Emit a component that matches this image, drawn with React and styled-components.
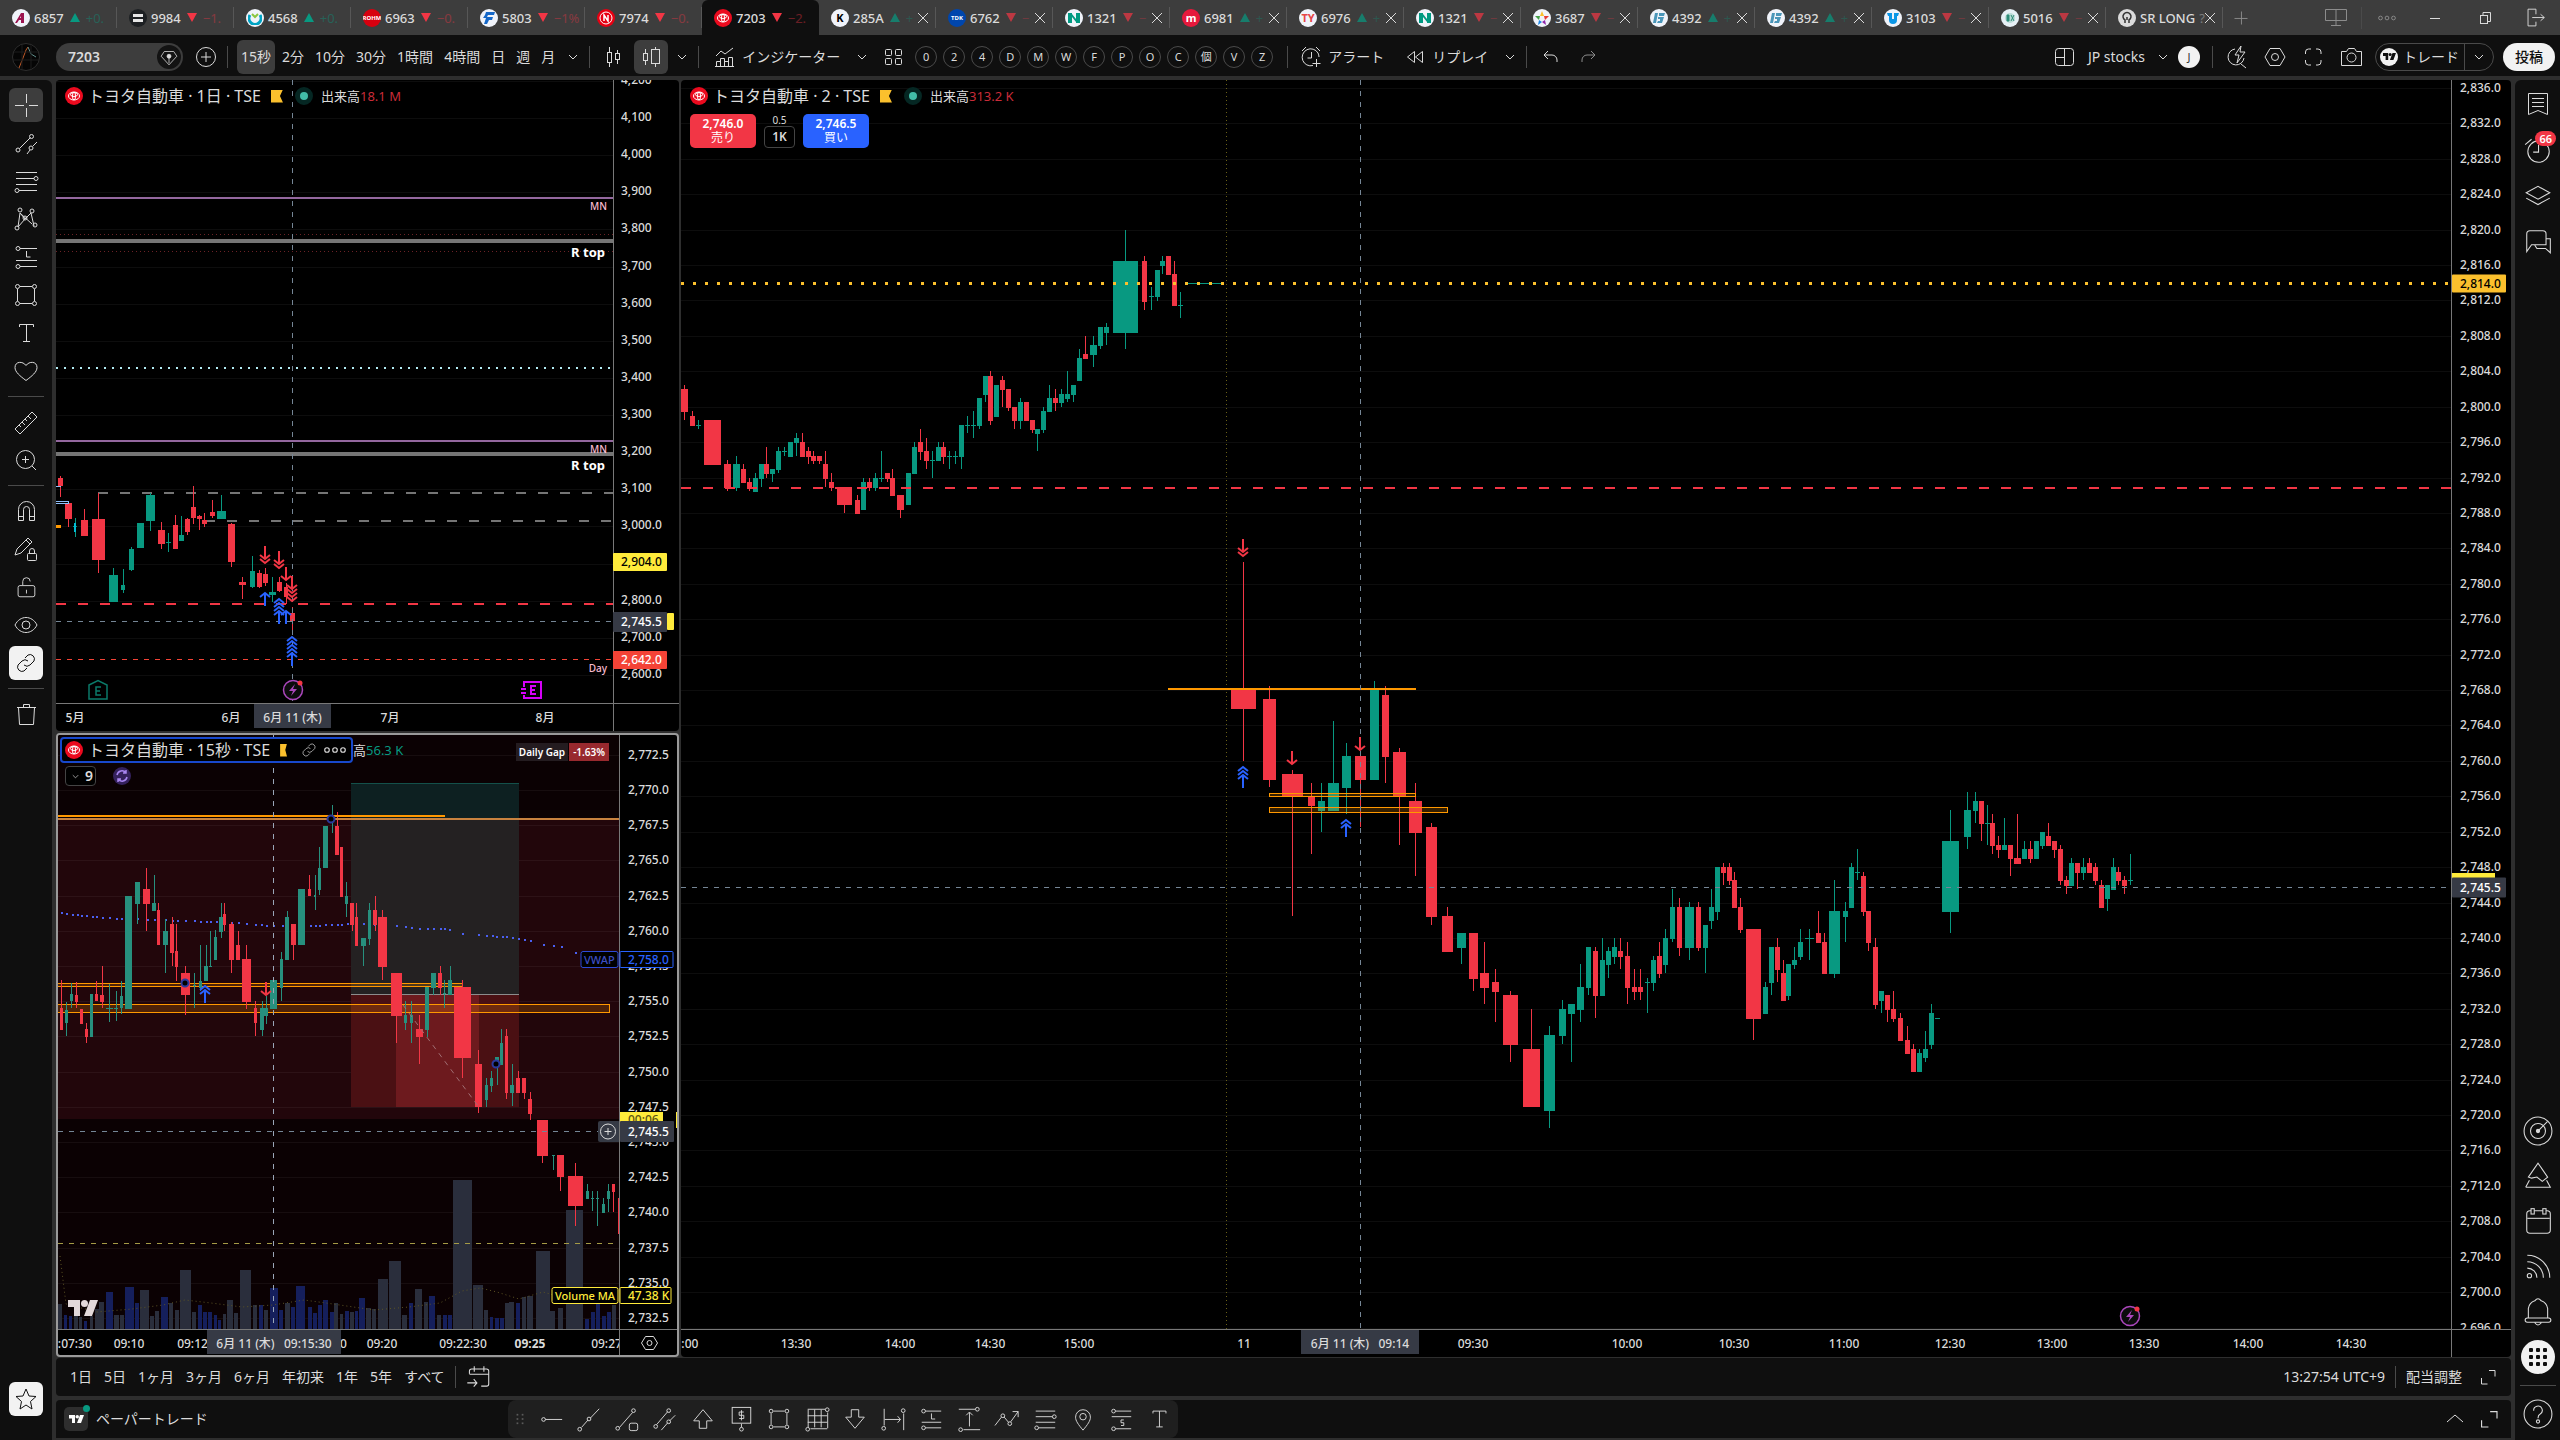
import React from "react";
import styled, { createGlobalStyle } from "styled-components";

const UP = "#089981";
const DOWN = "#f23645";

const GlobalStyle = createGlobalStyle`
  * {
    box-sizing: border-box;
  }
  body {
    margin: 0;
    background: #2e2e2e;
    color: #dbdbdb;
    font-family: "Noto Sans", "Noto Sans CJK JP", sans-serif;
    font-size: 14px;
    line-height: 20px;
  }
  button, input {
    font: inherit;
    color: inherit;
    border: 0;
    padding: 0;
    background: none;
  }
  button {
    cursor: pointer;
  }
  svg {
    display: block;
    flex: none;
  }
  svg text {
    font-size: 12px;
    font-weight: 500;
    fill: #dbdbdb;
  }
`;

/* ---------- icons, drawn on a 28px grid ---------- */

const dot = (x, y, r = 2) => <circle cx={x} cy={y} r={r} />;

const icons = {
  gem: <><path d="M8 7h12l4 6-10 11L4 13z" /><circle cx="14" cy="13" r="2.500" fill="currentColor" /><path d="M14 14v8" /></>,
  plusCircle: <><circle cx="14" cy="14" r="9.5" /><path d="M14 9v10M9 14h10" /></>,
  chevron: <path d="M10 12l4 4 4-4" />,
  chevronUp: <path d="M6 17l8-7 8 7" />,
  candles: <><path d="M10.500 4v5M10.500 20v4M18.500 7v3M18.500 17v4" /><rect x="8.500" y="9.500" width="4" height="10" /><rect x="16.500" y="10.500" width="4" height="6" /></>,
  volCandles: <><path d="M8.500 6v4M8.500 17v5M18.500 4v2M18.500 21v3" /><rect x="6.500" y="10.500" width="4" height="7" /><rect x="14.500" y="6.500" width="8" height="14" /></>,
  indicators: <><path d="M5 13l5-5 4 3 8-6M5.500 23.500v-5h4v5M9.500 23.500v-8h4v8M13.500 23.500v-5h4v5M17.500 23.500v-9h4v9M4 23.500h19" /></>,
  grid: <><rect x="6.500" y="6.500" width="6" height="6" rx="1" /><rect x="16.500" y="6.500" width="6" height="6" rx="1" /><rect x="6.500" y="15.500" width="6" height="6" rx="1" /><rect x="16.500" y="15.500" width="6" height="6" rx="1" /></>,
  alarm: <><path d="M21 10a8.500 8.500 0 1 0-5 12.500M14.500 9v6h-4M5 8l4-4M19 4l4 4M19.500 16v8M15.500 20.500h8" /><path d="M21 10a9 9 0 0 1 1 4" /></>,
  rewind: <><path d="M13.500 8.500v11L6.500 14z" /><path d="M21.500 8.500v11L14.500 14z" /></>,
  undo: <path d="M12 8l-4 4 4 4M8 12h8a5 5 0 0 1 5 5v2" />,
  redo: <path d="M17 8l4 4-4 4M21 12h-8a5 5 0 0 0-5 5v2" />,
  layout: <><rect x="5.500" y="5.500" width="18" height="17" rx="3" /><path d="M14.500 6v16M6 14.500h8" /></>,
  boltSearch: <><path d="M12 6a8 8 0 1 0 9 9M18 21l5 4M18 3l-6 9h4l-2 8 8-11h-5z" /></>,
  hexagon: <><path d="M9 5.500h10l5 8.500-5 8.500H9L4 14z" /><circle cx="14" cy="14" r="3.500" /></>,
  fullscreen: <path d="M6.500 11V9a3 3 0 0 1 3-3H12M17 6h2a3 3 0 0 1 3 3v2M22 17v2a3 3 0 0 1-3 3h-2M12 22H9.500a3 3 0 0 1-3-3v-2" />,
  camera: <><path d="M4.500 8.500h5l2-3h6l2 3h5v14h-20z" /><circle cx="14.500" cy="14.500" r="4.500" /></>,
  cross: <path d="M14.500 3v9M14.500 17v9M3 14.500h9M17 14.500h9" />,
  trend: <><path d="M7.500 19.500l11-11M15 25l3-4M21 17l4-4" />{dot(6, 21)}{dot(19.500, 7.500)}{dot(19, 19)}</>,
  fib: <><path d="M4 5.500h21M4 11.500h18M4 17.500h21M7 23.500h18" />{dot(24, 11.500)}{dot(5, 23.500)}</>,
  pattern: <><path d="M6 22l2-14 12 11M8 8l5 6 6-6 3 13M6 22l7-8" />{dot(8, 5)}{dot(20, 6)}{dot(5, 23)}{dot(23, 20)}{dot(13, 13)}</>,
  forecastL: <><path d="M8 5.500h17M14.500 8v6h4M4 17.500h21M8 23.500h17" />{dot(6, 5.500)}{dot(6, 23.500)}</>,
  forecastS: <><path d="M8 5.500h17M4 11.500h21M8 24.500h17M17 15h-3v3h3v3h-3" />{dot(6, 5.500)}{dot(6, 24.500)}</>,
  rect: <><path d="M8 5.500h12M8 22.500h12M5.500 8v12M22.500 8v12" />{dot(5.500, 5.500)}{dot(22.500, 5.500)}{dot(5.500, 22.500)}{dot(22.500, 22.500)}</>,
  text: <path d="M7.500 8V5.500h14V8M14.500 5.500v17M11 22.500h7" />,
  heart: <path d="M14 23.500C8 19 3 15 3 10.500 3 4 11 4 14 8.500 17 4 25 4 25 10.500 25 15 20 19 14 23.500z" />,
  ruler: <path d="M3 21L20 4l5 5L8 26zM7 17l2 2M10 14l3 3M13 11l2 2M16 8l3 3" />,
  zoom: <><circle cx="13.500" cy="13.500" r="9" /><path d="M20 20l4 4M13.500 10v7M10 13.500h7" /></>,
  magnet: <path d="M6.500 23.500v-11a8 8 0 0 1 16 0v11h-5v-11a3 3 0 0 0-6 0v11zM6.500 19.500h5M17.500 19.500h5" />,
  pencilLock: <><path d="M3 20l2-6L16 3l4 4L9 18zM14 5l4 4" /><rect x="15.500" y="18.500" width="9" height="7" rx="1" /><path d="M17.500 18v-2a2.500 2.500 0 0 1 5 0v2" /></>,
  lock: <><rect x="5.500" y="12.500" width="18" height="12" rx="2" /><path d="M10.500 12V8a4 4 0 0 1 8 0M14.500 17v4" /></>,
  eye: <><path d="M3 14c5-10 17-10 22 0-5 10-17 10-22 0z" /><circle cx="14" cy="14" r="4" /></>,
  link: <path d="M13 9l3-3a4.500 4.500 0 0 1 6 6l-4 4a4.500 4.500 0 0 1-6 0M15 19l-3 3a4.500 4.500 0 0 1-6-6l4-4a4.500 4.500 0 0 1 6 0" />,
  trash: <path d="M5 7.500h19M11.500 7V4.500h6V7M6.500 7.500l1 17h14l1-17" />,
  star: <path d="M14 4l3 7 7 .5-5.500 5L20 24l-6-4-6 4 1.500-7.500L4 11.500l7-.5z" />,
  bookmark: <path d="M4.500 3.500h19v21l-9.500-4-9.500 4zM8 8.500h12M8 12.500h12M8 16.500h12" />,
  clock: <><circle cx="14.500" cy="15.500" r="10" /><path d="M14.500 9v7h-5M2 9l6-5" /></>,
  layers: <path d="M3 11l11-6 11 6-11 6zM3 16l11 6 11-6" />,
  chats: <path d="M3.500 23V6.500a3 3 0 0 1 3-3h12a3 3 0 0 1 3 3v10H8zM11 17l2 3h8l4.500 4v-13h-4" />,
  radar: <><circle cx="14" cy="14" r="13" /><circle cx="14" cy="14" r="7" /><circle cx="14" cy="14" r="1.500" fill="currentColor" /><path d="M14 14l9-9" /></>,
  mountain: <path d="M2.500 24.500h23L22 18M2.500 24.500L6 18M5 15l9-13 9 13-5 4-5-4-5 1z" />,
  calendar: <><rect x="3.500" y="4.500" width="22" height="21" rx="3" /><path d="M4 11.500h21" /><rect x="7.500" y="2.500" width="3" height="5" fill="#0f0f0f" /><rect x="18.500" y="2.500" width="3" height="5" fill="#0f0f0f" /></>,
  rss: <><path d="M4 4a21 21 0 0 1 21 21M4 10a15 15 0 0 1 15 15M4 16a9 9 0 0 1 9 9" />{dot(6, 23)}</>,
  bell: <path d="M5 20.500v-9a9 9 0 0 1 6-7q3-4 6 0a9 9 0 0 1 6 7v9M4 20.500h20a2 2 0 0 1 0 4H4a2 2 0 0 1 0-4zM11 25q3 4 6 0" />,
  apps: <g fill="#0f0f0f" stroke="none">{[5, 12, 19].map((x) => [5, 12, 19].map((y) => <rect key={`${x}-${y}`} x={x} y={y} width="4" height="4" rx="1" />))}</g>,
  help: <><circle cx="14" cy="14" r="13" /><path d="M10 11a4 4 0 1 1 6 3q-2 1-2 4" />{dot(14, 21, 1.5)}</>,
  calGo: <path d="M6 11V8.500a2 2 0 0 1 2-2h14a2 2 0 0 1 2 2v12a2 2 0 0 1-2 2h-5M6 11.500h18M10.500 4v5M19.500 4v5M4 19.500h9M10 16l3 3.500-3 3.500" />,
  expand: <path d="M15 7.500h6v6M7.500 15v6h6" />,
  hray: <><path d="M8 14.500h18" />{dot(6, 14.500)}</>,
  ray: <><path d="M6 23l7-8M15.500 13L25 3" />{dot(4, 25)}{dot(14, 14)}</>,
  pathBox: <><path d="M6 23L20 7" />{dot(4, 24)}{dot(21, 5)}<rect x="16.500" y="18.500" width="9" height="8" rx="2" /></>,
  channel: <><path d="M5 20L17 6M10 26l7-8M19 16l6-6" />{dot(4, 22)}{dot(18, 5)}{dot(18, 17)}</>,
  arrowUp: <path d="M14 4l10 12h-6v8h-8v-8H4z" />,
  arrowDown: <path d="M14 24l10-12h-6V4h-8v8H4z" />,
  price: <><rect x="4.500" y="1.500" width="20" height="17" /><path d="M14.500 19v4M17 6.500h-5v3.500h5v3.500h-5M14.500 4.500v11" />{dot(14.500, 25)}</>,
  gridBox: <><path d="M4.500 4v19M11.500 4v19M18.500 4v19M25.500 7v17M4 3.500h19M4 10.500h21M4 17.500h21M7 24.500h18" />{dot(25, 4)}{dot(4, 25)}</>,
  hRange: <><path d="M4.500 3v18M25.500 8v18M5 14.500h17M19 11l3 3.500-3 3.500" />{dot(25, 5)}{dot(4, 24)}</>,
  vRange: <><path d="M3 3.500h18M8 25.500h18M14.500 22V7M11 10l3.500-3.500L18 10" />{dot(23, 3.500)}{dot(5, 25.500)}</>,
  zigzag: <><path d="M1 21l7-9M11 12l5 6M18 17l8-11M20 6h6v6" />{dot(9.500, 10.500)}{dot(17, 19)}</>,
  pin: <><path d="M14 26c-5-6-8-10-8-14a8 8 0 0 1 16 0c0 4-3 8-8 14z" /><circle cx="14" cy="11.500" r="3.500" /></>,
  drag: <g fill="#5a5a5a" stroke="none">{[10, 16].map((x) => [8, 13, 18].map((y) => <rect key={`${x}-${y}`} x={x} y={y} width="2" height="2" />))}</g>,
  more: <>{dot(7, 14)}{dot(14, 14)}{dot(21, 14)}</>,
  close: <path d="M9 9l10 10M19 9L9 19" />,
  plus: <path d="M14.500 7v14M7 14.500h14" />,
  minimize: <path d="M9 14.500h10" />,
  restore: <><rect x="9.500" y="11.500" width="7" height="8" /><path d="M12 11V8.500h7.500v9H17" /></>,
  exit: <path d="M15 10V4.500H6.500v18H15V18M11 13.500h13M20 10l4 3.500-4 3.500" />,
  monitor: <path d="M3.500 5.500h21v11h-21zM14 5v16M9 21.500h10" />,
};

const Icon = ({ name, size = 28 }) => (
  <svg width={size} height={size} viewBox="0 0 28 28" fill="none" stroke="currentColor" aria-hidden="true">
    {icons[name]}
  </svg>
);

const TvMark = ({ width = 30, color = "#d9d2d4" }) => (
  <svg width={width} viewBox="0 0 30 16" fill={color} aria-hidden="true">
    <path d="M0 0h12v16H6V7H0zM22 0h8l-6 16h-8z" />
    <circle cx="16.500" cy="3.500" r="3.500" />
  </svg>
);

const ToyotaMark = () => (
  <svg width="12" height="10" viewBox="0 0 12 10" fill="none" stroke="#fff" aria-hidden="true">
    <ellipse cx="6" cy="5" rx="5.500" ry="4" />
    <ellipse cx="6" cy="3.500" rx="3.500" ry="2" />
    <ellipse cx="6" cy="5" rx="1.500" ry="4" />
  </svg>
);

const DrawnLogo = ({ children }) => (
  <svg width="14" height="14" viewBox="0 0 14 14" aria-hidden="true">{children}</svg>
);

/* ---------- shell ---------- */

const Page = styled.div`
  min-height: 100vh;
  display: flex;
  flex-direction: column;
`;

const Logo = styled.span`
  flex: none;
  display: flex;
  align-items: center;
  justify-content: center;
  width: 18px;
  height: 18px;
  border-radius: 50%;
  overflow: hidden;
  background: ${(p) => p.$bg};
  color: ${(p) => p.$fg};
  font-size: ${(p) => (p.$small ? 6 : 11)}px;
  font-weight: 700;
  line-height: 18px;
`;

const TabBar = styled.nav`
  display: flex;
  align-items: center;
  height: 35px;
  background: #3d3d3d;
`;

const Tab = styled.div`
  display: flex;
  align-items: center;
  width: 117px;
  height: 35px;
  padding: 0 5px 0 12px;
  background: ${(p) => (p.$active ? "#0f0f0f" : "transparent")};
  border-radius: 6px 6px 0 0;
  position: relative;

  &::after {
    content: "";
    position: absolute;
    right: 0;
    top: 7px;
    width: 1px;
    height: 21px;
    background: ${(p) => (p.$active ? "transparent" : "#575757")};
  }
`;

const TabLabel = styled.button`
  flex: 1;
  min-width: 0;
  display: flex;
  align-items: center;
  gap: 4px;
  white-space: nowrap;
  font-size: 13px;
  font-weight: 500;
`;

const Change = styled.span`
  display: flex;
  align-items: center;
  gap: 6px;
  margin-left: 2px;
  color: ${(p) => (p.$up ? UP : DOWN)};
  opacity: ${(p) => (p.$dim ? 0.7 : 1)};

  &::before {
    content: "";
    border: 5px solid transparent;
    border-top-width: ${(p) => (p.$up ? 0 : 9)}px;
    border-bottom-width: ${(p) => (p.$up ? 9 : 0)}px;
    border-top-color: ${DOWN};
    border-bottom-color: ${UP};
  }
`;

const Fade = styled.span`
  opacity: 0.4;
  font-weight: 400;
`;

const IconButton = styled.button`
  flex: none;
  display: flex;
  align-items: center;
  justify-content: center;
  width: ${(p) => p.$w || 28}px;
  height: ${(p) => p.$h || 28}px;
  margin-left: ${(p) => p.$ml || 0}px;
  border-radius: 6px;
  color: ${(p) => (p.$dim ? "#8c8c8c" : p.$solid ? "#0f0f0f" : "#dbdbdb")};
  background: ${(p) => (p.$solid ? "#f2f2f2" : p.$active ? "#3d3d3d" : "none")};
`;

const Spacer = styled.div`
  flex: 1;
`;

const Toolbar = styled.header`
  display: flex;
  align-items: center;
  height: 41px;
  padding: 2px 5px 0 12px;
  background: #0f0f0f;
  white-space: nowrap;
`;

const Avatar = styled.span`
  width: 28px;
  height: 28px;
  border-radius: 50%;
  overflow: hidden;
  background: #050505;
  border: 1px solid #2e2e2e;
`;

const Search = styled.label`
  display: flex;
  align-items: center;
  width: 127px;
  height: 28px;
  margin: 0 11px 0 16px;
  padding: 0 2px 0 12px;
  border-radius: 14px;
  background: #3d3d3d;

  input {
    flex: 1;
    min-width: 0;
    font-weight: 600;
    outline: none;
  }
  span {
    display: flex;
    align-items: center;
    justify-content: center;
    width: 24px;
    height: 24px;
    border-radius: 50%;
    background: #131313;
  }
`;

const Divider = styled.span`
  flex: none;
  width: 1px;
  height: 22px;
  margin: 0 ${(p) => p.$m ?? 6}px;
  background: #4a4a4a;
`;

const Intervals = styled.div`
  display: flex;
  gap: 3px;
`;

const Interval = styled.button`
  height: 34px;
  padding: 0 4px;
  border-radius: 6px;
  background: ${(p) => (p.$active ? "#3d3d3d" : "none")};
`;

const TextButton = styled.button`
  display: flex;
  align-items: center;
  gap: ${(p) => p.$gap || 3}px;
  margin-left: ${(p) => p.$ml || 0}px;
`;

const Rounds = styled.div`
  display: flex;
  gap: 6px;
  margin: 0 13px 0 8px;
`;

const Round = styled.button`
  width: 22px;
  height: 22px;
  border: 1px solid #4a4a4a;
  border-radius: 50%;
  font-size: 11px;
  line-height: 20px;
`;

const User = styled.span`
  width: 22px;
  height: 22px;
  margin-left: 5px;
  border-radius: 50%;
  background: #f2f2f2;
  color: #333;
  font-size: 11px;
  line-height: 22px;
  text-align: center;
`;

const Trade = styled.div`
  display: flex;
  align-items: center;
  width: 119px;
  height: 28px;
  margin: 0 9px 0 10px;
  border: 1px solid #4a4a4a;
  border-radius: 14px;
`;

const TradeButton = styled.button`
  flex: 1;
  height: 26px;
  display: flex;
  align-items: center;
  gap: 5px;
  padding-left: 4px;
  border-right: 1px solid #4a4a4a;
`;

const Post = styled.button`
  width: 52px;
  height: 28px;
  border-radius: 14px;
  background: #f2f2f2;
  color: #0f0f0f;
  font-weight: 500;
`;

const Body = styled.div`
  flex: 1;
  display: grid;
  grid-template-columns: 52px minmax(0, 1fr) 45px;
  gap: 4px;
  margin-top: 4px;
`;

const SideBar = styled.aside`
  display: flex;
  flex-direction: column;
  align-items: center;
  gap: ${(p) => p.$gap || 0}px;
  padding: ${(p) => p.$pad};
  background: #0f0f0f;
  border-radius: ${(p) => (p.$right ? "6px 0 0 0" : "0 6px 0 0")};
`;

const SideRule = styled.hr`
  width: 36px;
  height: 1px;
  margin: ${(p) => p.$m ?? 4}px 0;
  border: 0;
  background: #4a4a4a;
`;

const AppsCircle = styled.button`
  display: flex;
  align-items: center;
  justify-content: center;
  width: 34px;
  height: 34px;
  margin-top: 7px;
  border-radius: 50%;
  background: #f2f2f2;
`;

const BadgeHolder = styled.div`
  position: relative;
`;

const Badge = styled.span`
  position: absolute;
  top: 4px;
  right: 4px;
  padding: 0 4px;
  border-radius: 8px;
  background: ${DOWN};
  color: #fff;
  font-size: 11px;
  font-weight: 600;
  line-height: 15px;
`;

const Center = styled.main`
  display: flex;
  flex-direction: column;
  min-width: 0;
  padding-bottom: 2px;
`;

const Charts = styled.div`
  flex: 1;
  display: grid;
  grid-template-columns: minmax(0, 623fr) minmax(0, 1830fr);
  grid-template-rows: minmax(0, 651fr) minmax(0, 624fr);
  gap: 2px;
`;

const Chart = styled.section`
  display: grid;
  grid-template-columns: minmax(0, 1fr) ${(p) => p.$axis}px;
  grid-template-rows: minmax(0, 1fr) ${(p) => (p.$selected ? 26 : 28)}px;
  position: relative;
  min-height: 0;
  overflow: hidden;
  background: #000;
  border-radius: 4px;
  border: ${(p) => (p.$selected ? "2px solid #9a9a9a" : "0")};
  grid-row: ${(p) => (p.$tall ? "1 / 3" : "auto")};
  grid-column: ${(p) => (p.$tall ? 2 : 1)};

  > svg {
    width: 100%;
    height: 100%;
    overflow: hidden;
  }
`;

const Legend = styled.div`
  position: absolute;
  top: ${(p) => p.$top}px;
  left: ${(p) => p.$left}px;
  display: flex;
  align-items: center;
  white-space: nowrap;
`;

const Title = styled.span`
  margin-left: 5px;
  font-size: 16px;
`;

const Flag = styled.span`
  width: 12px;
  height: 13px;
  margin: 0 12px 0 10px;
  background: #fbc02d;
  clip-path: polygon(0 0, 100% 0, 75% 50%, 100% 100%, 0 100%);
`;

const Status = styled.span`
  width: 18px;
  height: 18px;
  margin-right: 8px;
  border: 5px solid #052723;
  border-radius: 50%;
  background: #42bda8;
`;

const Volume = styled.span`
  font-size: 13px;
  color: #dbdbdb;

  b {
    font-weight: 400;
    color: ${(p) => (p.$up ? UP : "#c92c39")};
  }
`;

const SelectedLegend = styled.div`
  display: flex;
  align-items: center;
  width: 293px;
  height: 26px;
  padding-left: 3px;
  border: 2px solid #1848cc;
  border-radius: 4px;
  background: #000;
`;

const Orders = styled.div`
  position: absolute;
  top: 34px;
  left: 9px;
  display: flex;
  align-items: flex-end;
  gap: 8px;
`;

const OrderButton = styled.button`
  width: 66px;
  height: 34px;
  border-radius: 5px;
  background: ${(p) => p.$bg};
  color: #fff;
  font-size: 12px;
  line-height: 14px;

  b {
    display: block;
    font-weight: 600;
  }
`;

const Spread = styled.div`
  width: 31px;
  font-size: 10px;
  line-height: 12px;
  text-align: center;

  b {
    display: block;
    height: 22px;
    border: 1px solid #444;
    border-radius: 4px;
    font-size: 12px;
    font-weight: 600;
    line-height: 20px;
  }
`;

const Collapsed = styled.button`
  display: flex;
  align-items: center;
  width: 31px;
  height: 20px;
  margin-right: 17px;
  border: 1px solid #444;
  border-radius: 4px;
  background: #000;
  font-weight: 600;
`;

const Gap = styled.div`
  position: absolute;
  top: 8px;
  right: 68px;
  display: flex;
  gap: 1px;
  color: #fff;
  font-size: 10px;
  font-weight: 600;
  line-height: 18px;

  span {
    padding: 0 3px;
    background: #241c20;
  }
  span + span {
    padding: 0 4px;
    background: #98292e;
  }
`;

const RangeBar = styled.div`
  display: flex;
  align-items: center;
  gap: 12px;
  height: 38px;
  margin-top: 1px;
  padding: 0 9px 0 14px;
  background: #0f0f0f;
  border-radius: 4px;
  white-space: nowrap;
`;

const Panel = styled.div`
  display: flex;
  align-items: center;
  height: 38px;
  margin-top: 4px;
  padding-right: 5px;
  background: #0f0f0f;
  border-radius: 4px 4px 0 0;
`;

const Paper = styled.button`
  display: flex;
  align-items: center;
  gap: 8px;
  width: 452px;
  padding-left: 8px;
`;

const PaperIcon = styled.span`
  position: relative;
  display: flex;
  align-items: center;
  justify-content: center;
  width: 24px;
  height: 24px;
  border-radius: 5px;
  background: #2e2e2e;

  &::after {
    content: "";
    position: absolute;
    top: -2px;
    right: -2px;
    width: 7px;
    height: 7px;
    border-radius: 50%;
    background: ${UP};
  }
`;

const Favorites = styled.div`
  display: flex;
  align-items: center;
  height: 38px;
  border-radius: 8px;
  background: #1f1f1f;
`;

/* ---------- chart data ---------- */
/* A series keeps its bars on a fine grid; kx and ky are grid steps per pixel. */
/* Bar: [x, width, body top, body bottom, high, low, rising] */

const mainA = {
  x0: -11, y0: 120, kx: 2.6133, ky: 3,
  bars: [
    [38, 18, 567, 636, 555, 660, 0], [58, 13, 648, 678, 633, 678, 0], [74, 13, 674, 677, 660, 687, 1],
    [111, 44, 660, 795, 660, 795, 0], [150, 18, 792, 864, 780, 873, 0], [174, 18, 792, 864, 768, 873, 1],
    [192, 13, 807, 849, 792, 849, 0], [207, 13, 846, 867, 834, 873, 0], [223, 13, 834, 876, 819, 876, 1],
    [239, 13, 792, 837, 792, 861, 1], [252, 13, 792, 822, 741, 834, 0], [267, 13, 807, 822, 807, 846, 1],
    [283, 13, 753, 810, 741, 819, 1], [299, 13, 753, 756, 741, 768, 1], [314, 13, 726, 771, 726, 771, 1],
    [330, 13, 714, 729, 699, 768, 1], [346, 13, 726, 771, 699, 771, 0], [361, 13, 753, 771, 741, 792, 0],
    [375, 13, 768, 783, 753, 792, 0], [390, 13, 768, 783, 768, 792, 0], [406, 13, 792, 837, 753, 861, 0],
    [422, 13, 846, 864, 819, 873, 0], [456, 40, 862, 915, 862, 939, 0], [490, 14, 900, 942, 885, 942, 0],
    [505, 13, 846, 930, 834, 930, 1], [521, 13, 846, 864, 834, 873, 0], [537, 13, 834, 864, 819, 873, 1],
    [552, 13, 834, 837, 753, 846, 1], [568, 13, 819, 837, 819, 846, 0], [581, 13, 834, 888, 807, 888, 0],
    [602, 19, 885, 930, 885, 954, 0], [623, 13, 819, 915, 819, 915, 1], [638, 13, 741, 822, 726, 822, 1],
    [654, 13, 726, 756, 687, 780, 0], [670, 13, 753, 783, 714, 807, 0], [686, 13, 780, 783, 753, 834, 1],
    [701, 13, 741, 783, 726, 783, 1], [714, 13, 741, 771, 726, 792, 0], [730, 13, 768, 771, 753, 807, 1],
    [746, 13, 768, 771, 753, 792, 1], [761, 13, 675, 771, 675, 807, 1], [777, 13, 675, 678, 648, 699, 1],
    [793, 13, 675, 678, 633, 714, 1], [808, 13, 594, 678, 594, 687, 1], [824, 13, 528, 585, 528, 606, 1],
    [837, 13, 528, 663, 513, 675, 0], [853, 13, 555, 651, 555, 651, 1], [868, 13, 540, 570, 528, 621, 0],
    [884, 13, 567, 624, 567, 633, 0], [900, 13, 621, 663, 621, 687, 0], [916, 13, 606, 663, 594, 687, 1],
    [931, 13, 606, 663, 606, 663, 0], [947, 13, 660, 690, 660, 699, 0], [960, 13, 687, 702, 687, 753, 1],
    [976, 13, 633, 690, 621, 699, 1], [991, 13, 594, 636, 555, 636, 1], [1007, 13, 594, 609, 567, 633, 0],
    [1023, 13, 582, 609, 567, 621, 1], [1038, 13, 582, 597, 513, 606, 1], [1054, 13, 555, 585, 555, 606, 1],
    [1070, 13, 474, 543, 447, 543, 1], [1086, 13, 462, 477, 408, 477, 0], [1107, 18, 435, 465, 408, 501, 1],
    [1125, 13, 381, 438, 381, 447, 1], [1140, 13, 381, 399, 369, 435, 1], [1190, 65, 183, 399, 90, 447, 1],
    [1240, 14, 183, 306, 168, 330, 0], [1258, 13, 288, 291, 261, 330, 1], [1274, 14, 210, 291, 210, 303, 1],
    [1287, 13, 183, 198, 168, 222, 1], [1302, 13, 168, 225, 168, 225, 0], [1318, 13, 222, 318, 183, 318, 0],
    [1334, 13, 315, 318, 276, 354, 1], [1399, 90, 249, 252, 249, 252, 1],
  ],
};

const mainB = {
  x0: 459, y0: 440, kx: 3, ky: 2.45,
  bars: [
    [310, 75, 415, 463, 103, 590, 0], [388, 39, 439, 637, 407, 654, 0], [457, 63, 622, 677, 612, 970, 0],
    [514, 21, 678, 701, 644, 818, 0], [544, 21, 688, 713, 644, 764, 1], [580, 33, 644, 713, 492, 713, 1],
    [619, 27, 578, 657, 546, 720, 1], [661, 33, 578, 637, 578, 752, 0], [703, 27, 415, 637, 394, 637, 1],
    [736, 21, 429, 581, 407, 644, 0], [778, 39, 568, 677, 559, 796, 0], [826, 39, 688, 767, 644, 872, 0],
    [874, 33, 752, 973, 742, 992, 0], [922, 33, 970, 1058, 948, 1058, 0], [964, 27, 1012, 1049, 1012, 1088, 1],
    [1000, 27, 1012, 1125, 1012, 1154, 0], [1033, 27, 1110, 1147, 1034, 1186, 0], [1066, 21, 1132, 1156, 1100, 1230, 0],
    [1111, 45, 1164, 1286, 1154, 1328, 0], [1174, 51, 1296, 1438, 1198, 1438, 0], [1228, 33, 1262, 1448, 1240, 1490, 1],
  ],
};

const mainC = {
  x0: 859, y0: 680, kx: 2.45, ky: 3,
  bars: [
    [55, 17, 747, 828, 720, 852, 1], [77, 17, 732, 762, 732, 906, 1], [99, 17, 681, 750, 612, 786, 1],
    [119, 12, 561, 684, 561, 705, 1], [136, 12, 573, 708, 561, 774, 0], [153, 12, 600, 708, 534, 708, 1],
    [168, 12, 573, 615, 561, 654, 1], [182, 13, 561, 591, 534, 612, 1], [197, 12, 573, 591, 534, 627, 0],
    [214, 12, 588, 684, 546, 732, 0], [231, 13, 681, 696, 627, 720, 0], [246, 12, 681, 696, 627, 720, 0],
    [263, 12, 666, 669, 654, 759, 1], [278, 12, 600, 669, 588, 693, 1], [293, 12, 588, 642, 546, 654, 0],
    [307, 13, 534, 615, 507, 639, 1], [324, 13, 441, 537, 387, 546, 1], [342, 12, 441, 564, 414, 588, 0],
    [366, 22, 441, 564, 426, 600, 1], [388, 12, 441, 564, 426, 573, 0], [405, 13, 495, 564, 495, 639, 1],
    [420, 12, 441, 483, 387, 507, 1], [435, 12, 321, 456, 321, 480, 1], [449, 13, 321, 339, 309, 375, 0],
    [464, 12, 321, 363, 309, 375, 0], [476, 13, 360, 444, 336, 444, 0], [491, 12, 441, 510, 414, 519, 0],
    [523, 36, 507, 777, 507, 840, 0], [552, 13, 681, 762, 666, 762, 1], [567, 12, 561, 669, 561, 705, 1],
    [582, 12, 561, 630, 534, 666, 0], [596, 13, 639, 723, 600, 723, 0], [609, 12, 612, 708, 612, 720, 1],
    [623, 13, 600, 615, 561, 627, 1], [638, 12, 546, 591, 507, 600, 1], [660, 22, 534, 537, 507, 600, 1],
    [682, 12, 519, 549, 453, 549, 0], [697, 12, 546, 642, 519, 642, 0], [721, 27, 453, 642, 360, 654, 1],
    [748, 13, 453, 471, 426, 546, 1], [763, 12, 321, 444, 309, 444, 1], [778, 12, 336, 339, 267, 360, 1],
    [792, 13, 348, 456, 336, 468, 0], [805, 12, 453, 549, 453, 573, 0], [822, 12, 561, 735, 534, 747, 0],
    [837, 12, 693, 723, 693, 759, 1], [851, 12, 705, 750, 705, 786, 0], [866, 12, 747, 777, 693, 786, 0],
    [883, 12, 774, 843, 759, 843, 0], [900, 12, 840, 882, 798, 882, 0], [915, 12, 867, 936, 852, 936, 0],
    [930, 12, 879, 936, 867, 936, 1], [944, 13, 867, 894, 813, 906, 1], [959, 12, 759, 855, 732, 867, 1],
    [974, 12, 774, 777, 774, 777, 1], [1006, 42, 243, 456, 150, 519, 1], [1047, 17, 150, 231, 96, 267, 1],
    [1067, 12, 123, 153, 96, 189, 1], [1082, 12, 123, 192, 123, 243, 0], [1096, 12, 189, 192, 135, 255, 1],
    [1108, 13, 189, 258, 162, 282, 0], [1123, 12, 255, 270, 228, 294, 0], [1138, 12, 255, 270, 174, 270, 1],
    [1153, 12, 255, 297, 255, 348, 0], [1169, 17, 294, 312, 162, 312, 0], [1187, 12, 267, 297, 243, 297, 1],
    [1202, 12, 267, 297, 243, 309, 0], [1216, 13, 243, 297, 243, 297, 1], [1231, 12, 216, 258, 216, 267, 1],
    [1246, 12, 228, 258, 189, 258, 0], [1260, 13, 243, 270, 243, 294, 0], [1275, 12, 267, 363, 255, 375, 0],
    [1290, 12, 360, 378, 348, 402, 0], [1302, 12, 309, 378, 294, 378, 1], [1317, 12, 309, 339, 309, 387, 0],
    [1331, 13, 321, 339, 294, 360, 1], [1346, 12, 309, 339, 294, 339, 0], [1361, 12, 321, 363, 309, 375, 0],
    [1376, 12, 375, 444, 360, 444, 0], [1390, 12, 375, 417, 375, 453, 1], [1405, 12, 321, 390, 294, 390, 1],
    [1417, 12, 336, 363, 321, 375, 0], [1432, 12, 360, 378, 348, 402, 0], [1447, 12, 360, 363, 282, 375, 1],
  ],
};

const daily = {
  x0: -56, y0: -20, kx: 2.2725, ky: 2.3403,
  bars: [
    [137, 11, 978, 997, 973, 1023, 0], [156, 15, 1037, 1074, 1031, 1092, 0], [192, 16, 1077, 1114, 1051, 1114, 0],
    [171, 8, 1091, 1094, 1072, 1116, 1], [223, 30, 1074, 1170, 1013, 1201, 0], [257, 20, 1205, 1268, 1189, 1268, 1],
    [281, 10, 1229, 1240, 1192, 1247, 1], [299, 12, 1144, 1194, 1140, 1196, 1], [319, 16, 1084, 1142, 1084, 1142, 1],
    [342, 20, 1018, 1079, 1014, 1102, 1], [367, 16, 1100, 1133, 1081, 1144, 0], [383, 12, 1129, 1131, 1108, 1151, 1],
    [398, 11, 1088, 1144, 1066, 1144, 0], [412, 11, 1112, 1126, 1067, 1126, 1], [426, 12, 1074, 1105, 1072, 1112, 0],
    [439, 12, 1046, 1072, 997, 1085, 0], [453, 11, 1067, 1074, 1064, 1100, 0], [466, 12, 1077, 1086, 1060, 1092, 0],
    [483, 12, 1058, 1067, 1030, 1072, 0], [503, 21, 1055, 1074, 1019, 1074, 1], [527, 17, 1086, 1175, 1084, 1187, 0],
    [551, 16, 1222, 1229, 1210, 1261, 0], [573, 11, 1196, 1233, 1161, 1236, 1], [589, 11, 1201, 1233, 1194, 1236, 0],
    [603, 11, 1203, 1224, 1190, 1232, 0], [619, 16, 1245, 1251, 1210, 1268, 1], [635, 12, 1222, 1243, 1210, 1246, 0],
    [650, 10, 1233, 1256, 1225, 1273, 0], [664, 11, 1294, 1313, 1280, 1334, 0],
  ],
};

const seconds = {
  x0: -58, y0: -15, kx: 2.2725, ky: 2.1778,
  bars: [
    [139, 7, 628, 675, 566, 675, 0], [151, 7, 632, 660, 615, 688, 1], [163, 6, 597, 613, 573, 628, 1],
    [174, 7, 599, 615, 570, 628, 0], [185, 6, 630, 661, 630, 661, 0], [196, 7, 673, 690, 660, 703, 0],
    [208, 6, 597, 690, 597, 690, 1], [219, 6, 597, 612, 568, 613, 0], [231, 9, 599, 615, 536, 628, 0],
    [248, 16, 627, 629, 575, 657, 1], [264, 8, 627, 629, 590, 655, 1], [276, 7, 600, 628, 568, 641, 1],
    [293, 16, 383, 629, 383, 629, 1], [312, 11, 353, 401, 353, 444, 1], [333, 16, 368, 401, 322, 460, 0],
    [349, 8, 399, 415, 338, 417, 1], [360, 6, 414, 491, 398, 491, 0], [376, 11, 460, 491, 433, 551, 1],
    [390, 8, 444, 507, 430, 536, 0], [402, 7, 504, 538, 444, 568, 0], [421, 20, 551, 599, 536, 642, 0],
    [441, 7, 578, 580, 551, 628, 1], [455, 6, 569, 584, 490, 590, 1], [467, 8, 536, 568, 490, 568, 1],
    [478, 6, 536, 538, 460, 538, 1], [490, 7, 473, 522, 457, 522, 1], [501, 8, 429, 462, 399, 475, 1],
    [510, 7, 422, 446, 398, 460, 0], [526, 12, 444, 522, 440, 551, 0], [540, 8, 490, 523, 460, 523, 0],
    [560, 20, 520, 614, 490, 630, 0], [580, 7, 627, 660, 612, 688, 0], [594, 8, 628, 675, 612, 688, 1],
    [605, 8, 628, 644, 600, 661, 1], [621, 15, 566, 629, 566, 629, 1], [640, 7, 520, 584, 505, 612, 1],
    [653, 10, 429, 522, 415, 522, 1], [667, 12, 444, 491, 444, 522, 0], [685, 15, 368, 491, 368, 491, 1],
    [704, 7, 368, 384, 338, 384, 0], [715, 5, 382, 385, 338, 414, 1], [726, 6, 322, 370, 277, 382, 1],
    [739, 11, 231, 323, 231, 323, 1], [753, 8, 208, 220, 185, 246, 1], [765, 8, 231, 294, 200, 294, 0],
    [776, 7, 277, 385, 277, 385, 0], [788, 6, 383, 400, 352, 430, 1], [799, 8, 399, 446, 399, 460, 0],
    [810, 7, 430, 492, 399, 492, 0], [826, 12, 475, 492, 475, 536, 1], [839, 7, 414, 477, 399, 490, 1],
    [851, 8, 414, 447, 383, 460, 0], [869, 20, 429, 538, 414, 566, 0], [901, 25, 551, 645, 551, 703, 0],
    [921, 7, 643, 660, 612, 675, 1], [935, 7, 643, 660, 612, 703, 1], [953, 15, 673, 690, 643, 749, 0],
    [970, 8, 581, 675, 581, 690, 1], [985, 12, 551, 584, 551, 599, 1], [999, 8, 551, 584, 536, 599, 0],
    [1010, 6, 595, 597, 566, 628, 1], [1021, 8, 566, 599, 536, 599, 1], [1051, 38, 581, 736, 566, 780, 0],
    [1087, 16, 749, 843, 719, 856, 0], [1105, 6, 795, 828, 780, 843, 1], [1117, 6, 780, 797, 765, 810, 1],
    [1128, 8, 735, 752, 735, 795, 1], [1140, 7, 703, 752, 673, 752, 1], [1151, 6, 688, 812, 673, 825, 0],
    [1164, 10, 795, 812, 749, 841, 1], [1178, 10, 780, 812, 765, 812, 0], [1191, 8, 780, 812, 780, 825, 0],
    [1205, 10, 825, 858, 810, 871, 0], [1233, 25, 871, 950, 871, 964, 0], [1257, 7, 947, 949, 947, 979, 1],
    [1274, 15, 947, 995, 947, 1026, 0], [1307, 34, 993, 1058, 964, 1102, 0], [1334, 6, 1025, 1043, 1010, 1043, 1],
    [1346, 7, 1041, 1043, 1025, 1069, 1], [1358, 6, 1041, 1043, 1025, 1102, 1], [1371, 6, 1055, 1074, 1041, 1074, 1],
    [1383, 6, 1026, 1044, 1010, 1071, 1], [1394, 7, 1010, 1028, 1010, 1071, 0], [1406, 5, 1041, 1119, 1041, 1119, 0],
  ],
};

/* [x, width, top, buying] */
const volumes = [
  [137, 10, 1272, 0], [148, 7, 1296, 1], [160, 7, 1298, 1], [172, 8, 1298, 0], [183, 7, 1300, 0], [195, 7, 1309, 1],
  [207, 7, 1298, 0], [219, 8, 1283, 0], [230, 11, 1267, 0], [249, 16, 1246, 1], [266, 12, 1296, 0], [277, 8, 1296, 0],
  [294, 20, 1235, 1], [312, 10, 1270, 1], [329, 20, 1241, 0], [345, 8, 1298, 0], [356, 8, 1287, 0], [373, 15, 1257, 1],
  [390, 10, 1270, 0], [402, 8, 1285, 0], [421, 25, 1198, 0], [440, 8, 1289, 0], [453, 8, 1274, 1], [465, 8, 1289, 1],
  [477, 8, 1289, 1], [489, 7, 1296, 1], [500, 7, 1307, 1], [511, 7, 1294, 0], [522, 13, 1263, 0], [537, 10, 1291, 0],
  [557, 25, 1198, 0], [580, 8, 1274, 0], [592, 8, 1274, 1], [604, 8, 1285, 0], [622, 18, 1237, 1], [640, 10, 1285, 1],
  [653, 12, 1270, 0], [667, 10, 1278, 1], [683, 20, 1233, 1], [703, 8, 1278, 1], [715, 8, 1292, 1], [727, 8, 1274, 1],
  [739, 11, 1263, 1], [753, 8, 1289, 1], [764, 8, 1270, 0], [776, 7, 1294, 0], [788, 8, 1287, 1], [799, 8, 1289, 0],
  [810, 7, 1287, 1], [822, 13, 1259, 1], [838, 11, 1281, 0], [851, 10, 1283, 0], [870, 23, 1217, 0], [897, 27, 1178, 0],
  [920, 11, 1296, 0], [934, 10, 1270, 1], [951, 16, 1239, 0], [968, 10, 1267, 0], [982, 13, 1254, 1], [998, 8, 1296, 0],
  [1010, 8, 1296, 1], [1021, 8, 1296, 1], [1051, 44, 1002, 0], [1087, 22, 1230, 0], [1105, 8, 1285, 0], [1117, 7, 1300, 1],
  [1129, 8, 1302, 1], [1140, 8, 1302, 1], [1151, 8, 1270, 0], [1162, 11, 1267, 0], [1178, 10, 1269, 1], [1191, 10, 1257, 0],
  [1205, 13, 1254, 0], [1234, 32, 1156, 0], [1256, 12, 1287, 0], [1274, 12, 1280, 0], [1305, 39, 1067, 0], [1334, 9, 1304, 1],
  [1346, 8, 1289, 1], [1358, 8, 1272, 1], [1371, 8, 1298, 1], [1383, 8, 1289, 1], [1396, 9, 1274, 0],
];

const vwap = [
  [137, 419], [250, 430], [350, 433], [420, 436], [500, 438], [560, 442], [620, 447], [700, 447], [760, 444], [800, 442],
  [850, 444], [900, 447], [950, 452], [1020, 454], [1051, 463], [1087, 467], [1150, 471], [1205, 480], [1235, 489], [1274, 492], [1308, 506],
];

const volumeMa = [
  [137, 1167], [150, 1272], [220, 1290], [300, 1282], [370, 1274], [420, 1264], [480, 1270], [550, 1278], [620, 1274], [690, 1263],
  [740, 1270], [850, 1285], [930, 1278], [1000, 1270], [1051, 1243], [1090, 1238], [1130, 1245], [1180, 1260], [1235, 1245], [1290, 1262], [1400, 1265],
];

const px = (s, v) => Math.round(v / s.kx + s.x0);
const py = (s, v) => Math.round(v / s.ky + s.y0);

const valueAt = (points, x) => {
  const i = Math.max(1, points.findIndex((p) => p[0] >= x));
  const [ax, ay] = points[i - 1];
  const [bx, by] = points[i];
  return ay + ((by - ay) * (x - ax)) / (bx - ax);
};

const price = (v, digits = 1) =>
  v.toLocaleString("en-US", { minimumFractionDigits: digits, maximumFractionDigits: digits });

/* ---------- chart parts ---------- */

const Candles = ({ series, up = UP }) => (
  <g shapeRendering="crispEdges">
    {series.bars.map(([x, w, top, bottom, high, low, rising]) => {
      const left = px(series, x - w / 2);
      const width = Math.max(1, Math.round(w / series.kx));
      const fill = rising ? up : DOWN;
      return (
        <g key={x} fill={fill}>
          <rect x={left + Math.floor(width / 2)} y={py(series, high)} width="1" height={Math.max(1, py(series, low) - py(series, high))} />
          <rect x={left} y={py(series, top)} width={width} height={Math.max(1, py(series, bottom) - py(series, top))} />
        </g>
      );
    })}
  </g>
);

const Arrow = ({ x, y, n = 1, up }) => {
  const d = up ? -1 : 1;
  const chevrons = Array.from({ length: n }, (_, i) => `M${x - 5} ${y + d * (9 + i * 4)}l5 ${d * 4}l5 ${-d * 4}`).join("");
  return <path d={`M${x} ${y}v${d * 13}${chevrons}`} fill="none" stroke={up ? "#2962ff" : DOWN} strokeWidth="2" />;
};

const HLine = ({ y, x1 = 0, x2 = "100%", ...rest }) => <line x1={x1} x2={x2} y1={y} y2={y} {...rest} />;

const Tag = ({ x = 0, y, w = 54, h = 18, fill, color = "#fff", border, children }) => (
  <>
    <rect x={x} y={y - h / 2} width={w} height={h} rx="1" fill={fill} stroke={border} />
    <text x={x + 8} y={y + 4} style={{ fill: color }}>{children}</text>
  </>
);

const TimeTag = ({ x, w, children }) => (
  <>
    <rect x={x} y="1" width={w} height="24" fill="#363a45" />
    <text x={x + w / 2} y="19" textAnchor="middle" xmlSpace="preserve">{children}</text>
  </>
);

const Times = ({ items }) => items.map(([x, label, bold]) => (
  <text key={x} x={x} y="19" textAnchor="middle" style={{ fontWeight: bold ? 700 : 500 }}>{label}</text>
));

const Bolt = ({ x, y }) => (
  <g fill="none" stroke="#ab47bc" strokeWidth="1.500">
    <circle cx={x} cy={y} r="9.500" fill="#0c0c0c" />
    <path d={`M${x + 2} ${y - 6}l-6 7h4l-2 5 6-7h-4z`} fill="#ab47bc" strokeWidth="0" />
    <circle cx={x + 7} cy={y - 7} r="2.500" fill={DOWN} stroke="none" />
  </g>
);

const Frame = styled.line.attrs({ stroke: "#787878", shapeRendering: "crispEdges" })``;

const TimeAxis = ({ children }) => (
  <svg>
    <Frame x1="0" x2="100%" y1="0.5" y2="0.5" />
    {children}
  </svg>
);

const Corner = ({ children }) => (
  <svg>
    <Frame x1="0" x2="100%" y1="0.5" y2="0.5" />
    <Frame x1="0.5" x2="0.5" y1="0" y2="100%" />
    {children}
  </svg>
);

const DailyChart = () => {
  const y = (p) => Math.round(38 + (4100 - p) * 0.3713);
  const prices = Array.from({ length: 17 }, (_, i) => 4200 - i * 100);
  return (
    <Chart $axis={66}>
      <svg>
        <g shapeRendering="crispEdges">
          {prices.map((p) => <HLine key={p} y={y(p) + 0.5} stroke="#0d0d0d" />)}
          <HLine y={118} stroke="#93679e" strokeWidth="2" />
          <HLine y={154.5} stroke="#6b2226" strokeDasharray="1 3" />
          <HLine y={161} stroke="#757575" strokeWidth="4" />
          <HLine y={171.5} stroke="#6b2226" strokeDasharray="1 3" />
          <HLine y={288} stroke="#b2ebf2" strokeWidth="2" strokeDasharray="2 6" />
          <HLine y={361} stroke="#93679e" strokeWidth="2" />
          <HLine y={374} stroke="#757575" strokeWidth="4" />
          <HLine y={413} x1={42} stroke="#757575" strokeWidth="2" strokeDasharray="10 12" />
          <HLine y={441} x1={149} stroke="#757575" strokeWidth="2" strokeDasharray="10 12" />
        </g>
        <Candles series={daily} />
        <g shapeRendering="crispEdges">
          <HLine y={524} stroke={DOWN} strokeWidth="2" strokeDasharray="10 12" />
          <HLine y={541.5} stroke="#758696" strokeDasharray="5 6" />
          <HLine y={579.5} stroke="#f44336" strokeDasharray="5 6" />
          <rect x="0" y="406" width="5" height="1" fill="#90bff9" />
          <rect x="-1" y="421.500" width="13" height="2" fill="#000" stroke="#90bff9" />
          <rect x="0" y="445" width="5" height="3" fill="#ff9800" />
          <rect x="18" y="443" width="2" height="9" fill="#00bcd4" />
          <line x1="236.5" x2="236.5" y1="0" y2="100%" stroke="#758696" strokeDasharray="5 6" />
        </g>
        <Arrow x={209} y={466} n={2} />
        <Arrow x={223} y={471} n={2} />
        <Arrow x={230} y={487} />
        <Arrow x={236} y={496} n={4} />
        <Arrow x={209} y={526} up />
        <Arrow x={223} y={544} n={4} up />
        <Arrow x={230} y={544} up />
        <Arrow x={236} y={586} n={5} up />
        <g fill="none" stroke="#0b7a69" strokeWidth="1.500">
          <path d="M33 605l9-4.500 9 4.500v14H33z" />
          <path d="M45 607h-5v8h5M40 611h4" />
        </g>
        <Bolt x={237} y={610} />
        <g fill="none" stroke="#d500f9" strokeWidth="2">
          <path d="M468 607v-5h17v16h-17v-3M465 609h5M465 613h5" />
          <path d="M480 606h-5v8h5M475 610h4" />
        </g>
        <svg x="100%" overflow="visible">
          <g textAnchor="end">
            <text x="-6" y="130" style={{ fill: "#f8bbd0", fontSize: 10 }}>MN</text>
            <text x="-8" y="177" style={{ fill: "#fff", fontSize: 13, fontWeight: 700 }}>R top</text>
            <text x="-6" y="373" style={{ fill: "#f8bbd0", fontSize: 10 }}>MN</text>
            <text x="-8" y="390" style={{ fill: "#fff", fontSize: 13, fontWeight: 700 }}>R top</text>
            <text x="-6" y="592" style={{ fill: "#f8bbd0", fontSize: 10 }}>Day</text>
          </g>
        </svg>
      </svg>
      <svg>
        <Frame x1="0.5" x2="0.5" y1="0" y2="100%" />
        {prices.filter((p) => p !== 2900).map((p) => (
          <text key={p} x="8" y={y(p) + 3}>{price(p, p > 3000 ? 0 : 1)}</text>
        ))}
        <rect x="54" y="533" width="7" height="17" rx="1" fill="#ffeb3b" />
        <Tag y={482} fill="#ffeb3b" color="#000">2,904.0</Tag>
        <Tag y={542} h={20} fill="#363a45">2,745.5</Tag>
        <Tag y={580} fill="#f44336">2,642.0</Tag>
      </svg>
      <TimeAxis>
        <Times items={[[19, "5月"], [175, "6月"], [334, "7月"], [489, "8月"]]} />
        <TimeTag x={198} w={77}>6月 11 (木)</TimeTag>
      </TimeAxis>
      <Corner />
      <Legend $top={6} $left={9}>
        <Logo $bg="#eb0a1e"><ToyotaMark /></Logo>
        <Title>トヨタ自動車 · 1日 · TSE</Title>
        <Flag />
        <Status />
        <Volume>出来高<b>18.1 M</b></Volume>
      </Legend>
    </Chart>
  );
};

const SecondsChart = () => {
  const y = (p) => Math.round(55 + (2770 - p) * 14.077);
  const prices = Array.from({ length: 17 }, (_, i) => 2772.5 - i * 2.5);
  const s = seconds;
  const vwapXs = s.bars.map((b) => b[0]).filter((x) => x < 1308);
  return (
    <Chart $axis={58} $selected>
      <svg>
        <g shapeRendering="crispEdges">
          <rect width="100%" height="100%" fill="#0b0103" />
          <rect y="84" width="100%" height="300" fill="#22060b" />
          {prices.map((p) => <HLine key={p} y={y(p) + 0.5} stroke="#fff" strokeOpacity="0.05" />)}
          {volumes.map(([x, w, top, buying]) => (
            <rect key={x} x={px(s, x - w / 2)} y={py(s, top)} width={Math.round(w / s.kx)} height={594 - py(s, top)} fill={buying ? "#151f5c" : "#2a2e3c"} />
          ))}
          <HLine y={508.5} stroke="#a59b46" strokeDasharray="5 6" />
        </g>
        <polyline points={volumeMa.map(([x, v]) => `${px(s, x)},${py(s, v)}`).join(" ")} fill="none" stroke="#5c5424" strokeDasharray="1 3" />
        <g shapeRendering="crispEdges">
          <rect x="293" y="48" width="168" height="36" fill="#0d2021" />
          <rect x="293" y="84" width="168" height="176" fill="#242122" />
          <rect x="293" y="260" width="168" height="112" fill="#4a1013" />
          <rect x="338" y="260" width="83" height="112" fill="#6d1a1e" />
          <HLine y={48.5} x1={293} x2={461} stroke="#14504a" />
          <HLine y={259.5} x1={293} x2={461} stroke="#8c8c8c" />
          <rect x="-2" y="248" width="406" height="3" fill="#ff9800" fillOpacity="0.2" stroke="#ff9800" />
          <rect x="-2" y="269" width="553" height="8" fill="#ff9800" fillOpacity="0.2" stroke="#ff9800" />
          <g fill="#4a5ff0">
            {vwapXs.map((x) => (
              <rect key={x} x={px(s, x)} y={py(s, valueAt(vwap, x))} width="2" height="2" />
            ))}
          </g>
        </g>
        <Candles series={seconds} up="#27907e" />
        <path d="M345 270l75 101" stroke="#a06d72" strokeDasharray="5 5" />
        <g shapeRendering="crispEdges">
          <HLine y={81} x2={387} stroke="#ff9800" strokeWidth="2" />
          <HLine y={84} stroke="#c8823f" strokeWidth="2" />
          <HLine y={396.5} stroke="#758696" strokeDasharray="5 6" />
          <line x1="215.500" x2="215.500" y1="0" y2="100%" stroke="#9aa6b8" strokeDasharray="5 6" />
        </g>
        {[[753, 216], [421, 573], [1128, 750]].map(([x, v]) => (
          <circle key={x} cx={px(s, x)} cy={py(s, v)} r="3.500" fill="#000" stroke="#2a3a9c" strokeWidth="2" />
        ))}
        <Arrow x={147} y={268} n={2} up />
        <Arrow x={208} y={247} />
        <svg x="100%" overflow="visible">
          <rect x="-38" y="216.500" width="37" height="16" rx="2" fill="#000" stroke="#2d4bd8" />
          <text x="-35" y="229" style={{ fill: "#3d4ec4", fontSize: 11 }}>VWAP</text>
          <rect x="-21" y="386" width="22" height="21" rx="2" fill="#363a45" />
          <circle cx="-11" cy="396.500" r="7.500" fill="none" stroke="#dbdbdb" />
          <path d="M-11 393v7M-14.500 396.500h7" stroke="#dbdbdb" />
          <rect x="-67" y="552.500" width="66" height="16" rx="2" fill="#000" stroke="#ffeb3b" />
          <text x="-64" y="565" style={{ fill: "#ffeb3b", fontSize: 11 }}>Volume MA</text>
        </svg>
        <g transform="translate(10 565)" fill="#e3d8da">
          <path d="M0 0h12v16H6V7H0zM22 0h8l-6 16h-8z" />
          <circle cx="16.500" cy="3.500" r="3.500" />
        </g>
      </svg>
      <svg>
        <Frame x1="0.5" x2="0.5" y1="0" y2="100%" />
        {prices.map((p) => <text key={p} x="9" y={y(p) + 4}>{price(p)}</text>)}
        <rect x="1" y="377" width="43" height="12" fill="#ffeb3b" />
        <text x="9" y="389" style={{ fill: "#5a5212" }}>00:06</text>
        <rect x="57" y="377" width="2" height="16" fill="#ffeb3b" />
        <Tag x={1} y={224.5} h={16} w={53} fill="#000" border="#2962ff" color="#2962ff">2,758.0</Tag>
        <Tag x={1} y={396.5} h={21} fill="#363a45">2,745.5</Tag>
        <Tag x={1} y={560.5} h={16} w={51} fill="#000" border="#ffeb3b" color="#ffeb3b">47.38 K</Tag>
      </svg>
      <TimeAxis>
        <Times items={[[10, "09:07:30"], [71, "09:10"], [143, "09:12:30"], [265, "09:17:30"], [324, "09:20"], [405, "09:22:30"], [472, "09:25", true], [557, "09:27:30"]]} />
        <TimeTag x={149} w={134}>{"6月 11 (木)   09:15:30"}</TimeTag>
      </TimeAxis>
      <Corner>
        <g fill="none" stroke="#dbdbdb">
          <path d="M26.500 7.500h8l4 6.500-4 6.500h-8l-4-6.500z" />
          <circle cx="30.500" cy="14" r="2.500" />
        </g>
      </Corner>
      <Legend $top={2} $left={2}>
        <SelectedLegend>
          <Logo $bg="#eb0a1e"><ToyotaMark /></Logo>
          <Title>トヨタ自動車 · 15秒 · TSE</Title>
          <Flag />
          <Icon name="link" size={20} />
          <Icon name="more" size={32} />
        </SelectedLegend>
        <Volume $up>高<b>56.3 K</b></Volume>
      </Legend>
      <Legend $top={31} $left={7}>
        <Collapsed aria-label="9 個のインジケーター"><Icon name="chevron" size={19} />9</Collapsed>
        <svg width="18" height="18" fill="none" stroke="#a885f0">
          <circle cx="9" cy="9" r="9" fill="#34215c" stroke="none" />
          <path d="M4 8a5 5 0 0 1 9-2M14 10a5 5 0 0 1-9 2M13 3v3h-3M5 15v-3h3" strokeWidth="1.500" />
        </svg>
      </Legend>
      <Gap><span>Daily Gap</span><span>-1.63%</span></Gap>
    </Chart>
  );
};

const MainChart = () => {
  const y = (p) => Math.round(8 + (2836 - p) * 8.854);
  const prices = Array.from({ length: 36 }, (_, i) => 2836 - i * 4);
  return (
    <Chart $axis={60} $tall>
      <svg>
        <g shapeRendering="crispEdges">
          {prices.map((p) => <HLine key={p} y={y(p) + 0.5} stroke="#0d0d0d" />)}
          <line x1="545.500" x2="545.500" y1="0" y2="100%" stroke="#6b6118" strokeDasharray="1 3" />
        </g>
        <Candles series={mainA} />
        <Candles series={mainB} />
        <Candles series={mainC} />
        <g shapeRendering="crispEdges">
          <HLine y={203.5} stroke="#fbc02d" strokeWidth="3" strokeDasharray="3 9" />
          <HLine y={408} stroke={DOWN} strokeWidth="2" strokeDasharray="10 12" />
          <HLine y={609} x1={487} x2={735} stroke="#ff9800" strokeWidth="2" />
          <rect x="588.500" y="713.500" width="146" height="3" fill="#ff9800" fillOpacity="0.2" stroke="#ff9800" />
          <rect x="588.500" y="727.500" width="178" height="5" fill="#ff9800" fillOpacity="0.2" stroke="#ff9800" />
          <HLine y={807.5} stroke="#758696" strokeDasharray="5 6" />
          <line x1="679.500" x2="679.500" y1="0" y2="100%" stroke="#758696" strokeDasharray="5 6" />
        </g>
        <Arrow x={562} y={459} n={2} />
        <Arrow x={611} y={671} />
        <Arrow x={679} y={657} />
        <Arrow x={562} y={708} n={3} up />
        <Arrow x={665} y={757} n={2} up />
        <Bolt x={1449} y={1236} />
      </svg>
      <svg>
        <Frame x1="0.5" x2="0.5" y1="0" y2="100%" />
        {prices.map((p) => <text key={p} x="9" y={y(p) + 4}>{price(p)}</text>)}
        <rect x="1" y="793" width="43" height="12" fill="#ffeb3b" />
        <Tag x={1} y={203.5} fill="#fbc02d" color="#000">2,814.0</Tag>
        <Tag x={1} y={807.5} h={20} fill="#363a45">2,745.5</Tag>
      </svg>
      <TimeAxis>
        <Times
          items={[
            [2, "13:00"], [115, "13:30"], [219, "14:00"], [309, "14:30"], [398, "15:00"], [563, "11"], [792, "09:30"],
            [946, "10:00"], [1053, "10:30"], [1163, "11:00"], [1269, "12:30"], [1371, "13:00"], [1463, "13:30"], [1567, "14:00"], [1670, "14:30"],
          ]}
        />
        <TimeTag x={620} w={118}>{"6月 11 (木)   09:14"}</TimeTag>
      </TimeAxis>
      <Corner />
      <Legend $top={6} $left={9}>
        <Logo $bg="#eb0a1e"><ToyotaMark /></Logo>
        <Title>トヨタ自動車 · 2 · TSE</Title>
        <Flag />
        <Status />
        <Volume>出来高<b>313.2 K</b></Volume>
      </Legend>
      <Orders>
        <OrderButton $bg={DOWN}><b>2,746.0</b>売り</OrderButton>
        <Spread>0.5<b>1K</b></Spread>
        <OrderButton $bg="#2962ff"><b>2,746.5</b>買い</OrderButton>
      </Orders>
    </Chart>
  );
};

/* ---------- bars around the charts ---------- */

const toyota = <ToyotaMark />;

const advantest = <DrawnLogo><path d="M1 12L7 2h3v10H7V9H5l-2 3zM6 7h1V5z" fill="#9c1550" /></DrawnLogo>;
const softbank = <DrawnLogo><path d="M2 3h10v3H2zM2 8h10v3H2z" fill="#e6e6e6" /></DrawnLogo>;
const daiichi = (
  <DrawnLogo>
    <path d="M2 4a6 6 0 1 0 10 0" fill="none" stroke="#00a3c4" strokeWidth="3" />
    <path d="M4 3l3 3 3-3" fill="none" stroke="#8cc63f" strokeWidth="2" />
  </DrawnLogo>
);
const fujikura = <DrawnLogo><path d="M4 1h9l-1 3H6L5 6h6l-1 3H7l-2 4H2l2-6H1l2-3z" fill="#1467c8" /></DrawnLogo>;
const nomura = <DrawnLogo><path d="M1 2h4v10H1zM9 2h4v10H9zM5 3l4 5v3L5 6z" fill="#009a82" /></DrawnLogo>;
const nintendo = (
  <DrawnLogo>
    <circle cx="7" cy="7" r="6" fill="none" stroke="#fff" />
    <path d="M5 10V4l4 6V4" fill="none" stroke="#fff" strokeWidth="1.500" />
  </DrawnLogo>
);
const fixstars = (
  <DrawnLogo>
    <path d="M7 0l2 5H5z" fill="#fbc02d" /><path d="M14 5l-4 4-1-4z" fill="#e53935" />
    <path d="M11 14l-4-3 3-2z" fill="#8e24aa" /><path d="M3 14l1-5 3 2z" fill="#1e88e5" />
    <path d="M0 5h5l-1 4z" fill="#43a047" />
  </DrawnLogo>
);
const stripes = <DrawnLogo><path d="M3 2h3L4 12H1zM7 2h6l-1 3H7zM6 6h6l-2 6H5l1-2h2V8H6z" fill="#4a96b9" /></DrawnLogo>;
const unitika = <DrawnLogo><path d="M1 2h5v6h2V2h5l-1 3h-1v4a4 4 0 0 1-8 0V5H2z" fill="#0a96e6" /></DrawnLogo>;
const jx = (
  <DrawnLogo>
    <circle cx="7" cy="7" r="5" fill="#b9dcd6" />
    <path d="M4 4v6h2V4zM8 4l3 6M11 4l-3 6" fill="#2d8c78" stroke="#2d8c78" />
  </DrawnLogo>
);
const script = (
  <DrawnLogo>
    <path d="M5 12V9a4 4 0 1 1 4 0v3M7 6v3" fill="none" stroke="#333" strokeWidth="1.500" />
  </DrawnLogo>
);

const tabs = [
  { code: "6857", up: true, pct: "+0.", logo: advantest, bg: "#f0f3fa" },
  { code: "9984", pct: "−1.", logo: softbank, bg: "#1d2023" },
  { code: "4568", up: true, pct: "+0.", logo: daiichi, bg: "#f0f3fa" },
  { code: "6963", pct: "−0.", logo: "ROHM", bg: "#d7000f", fg: "#fff", small: true },
  { code: "5803", pct: "−1%", logo: fujikura, bg: "#f0f3fa" },
  { code: "7974", pct: "−0.", logo: nintendo, bg: "#e60012" },
  { code: "7203", pct: "−2.", logo: toyota, bg: "#eb0a1e", active: true },
  { code: "285A", up: true, logo: "K", bg: "#f0f3fa", fg: "#000", closable: true },
  { code: "6762", logo: "TDK", bg: "#0046ad", fg: "#fff", small: true, closable: true },
  { code: "1321", logo: nomura, bg: "#f0f3fa", closable: true },
  { code: "6981", up: true, logo: "m", bg: "#e6193c", fg: "#fff", closable: true },
  { code: "6976", up: true, logo: "TY", bg: "#f0f3fa", fg: "#e64646", closable: true },
  { code: "1321", logo: nomura, bg: "#f0f3fa", closable: true },
  { code: "3687", logo: fixstars, bg: "#f0f3fa", closable: true },
  { code: "4392", up: true, logo: stripes, bg: "#f0f3fa", closable: true },
  { code: "4392", up: true, logo: stripes, bg: "#f0f3fa", closable: true },
  { code: "3103", logo: unitika, bg: "#f0f3fa", closable: true },
  { code: "5016", logo: jx, bg: "#e6f0f5", closable: true },
  { code: "SR LONG", logo: script, bg: "#dbdbdb", closable: true, plain: true },
];

const drawTools = ["cross", "trend", "fib", "pattern", "forecastL", "rect", "text", "heart"];
const favorites = [
  "hray", "ray", "pathBox", "channel", "arrowUp", "price", "rect", "gridBox", "arrowDown",
  "hRange", "forecastL", "vRange", "zigzag", "fib", "pin", "forecastS", "text",
];
const intervals = ["15秒", "2分", "10分", "30分", "1時間", "4時間", "日", "週", "月"];
const rounds = ["0", "2", "4", "D", "M", "W", "F", "P", "O", "C", "個", "V", "Z"];
const ranges = ["1日", "5日", "1ヶ月", "3ヶ月", "6ヶ月", "年初来", "1年", "5年", "すべて"];

const Tabs = () => (
  <TabBar>
    {tabs.map((t, i) => (
      <Tab key={i} $active={t.active}>
        <TabLabel>
          <Logo $bg={t.bg} $fg={t.fg} $small={t.small}>{t.logo}</Logo>
          {t.code}
          {t.plain ? <Fade>?</Fade> : (
            <Change $up={t.up} $dim={t.closable}><Fade>{t.pct || (t.up ? "+" : "−")}</Fade></Change>
          )}
        </TabLabel>
        {t.closable && <IconButton $w={16} $h={24} aria-label="閉じる"><Icon name="close" size={28} /></IconButton>}
      </Tab>
    ))}
    <IconButton $w={36} $dim aria-label="新しいタブ"><Icon name="plus" size={26} /></IconButton>
    <Spacer />
    <IconButton $dim aria-label="画面分割"><Icon name="monitor" size={28} /></IconButton>
    <Divider $m={11} />
    <IconButton $dim aria-label="その他"><Icon name="more" size={26} /></IconButton>
    <IconButton $w={50} $ml={9} aria-label="最小化"><Icon name="minimize" /></IconButton>
    <IconButton $w={50} aria-label="元に戻す"><Icon name="restore" /></IconButton>
    <IconButton $w={50} aria-label="終了"><Icon name="exit" size={26} /></IconButton>
  </TabBar>
);

const TopToolbar = () => (
  <Toolbar>
    <Avatar>
      <svg width="26" height="26" fill="none">
        <path d="M6 24l4-10 3-8 2-3" stroke="#c25a28" />
        <path d="M15 3l3 7 5 3" stroke="#5f8f8c" />
        <path d="M0 8h26M0 16h26M9 0v26M18 0v26" stroke="#1d1d1d" />
      </svg>
    </Avatar>
    <Search>
      <input defaultValue="7203" aria-label="シンボル検索" />
      <span><Icon name="gem" size={22} /></span>
    </Search>
    <IconButton $w={24} aria-label="比較"><Icon name="plusCircle" size={28} /></IconButton>
    <Divider $m={9} />
    <Intervals>
      {intervals.map((t, i) => <Interval key={t} $active={i === 0}>{t}</Interval>)}
    </Intervals>
    <IconButton $w={20} $ml={4} aria-label="時間足メニュー"><Icon name="chevron" /></IconButton>
    <Divider />
    <IconButton $w={34} aria-label="ローソク足"><Icon name="candles" /></IconButton>
    <IconButton $w={34} $h={34} $ml={4} $active aria-label="出来高足"><Icon name="volCandles" /></IconButton>
    <IconButton $w={20} $ml={4} aria-label="足の種類"><Icon name="chevron" /></IconButton>
    <Divider />
    <TextButton $ml={6}><Icon name="indicators" />インジケーター</TextButton>
    <IconButton $w={20} $ml={12} aria-label="お気に入り"><Icon name="chevron" /></IconButton>
    <IconButton $ml={7} aria-label="テンプレート"><Icon name="grid" /></IconButton>
    <Rounds>
      {rounds.map((r) => <Round key={r}>{r}</Round>)}
    </Rounds>
    <Divider $m={1} />
    <TextButton $ml={8}><Icon name="alarm" />アラート</TextButton>
    <TextButton $ml={17}><Icon name="rewind" />リプレイ</TextButton>
    <IconButton $w={20} $ml={12} aria-label="リプレイメニュー"><Icon name="chevron" /></IconButton>
    <Divider />
    <IconButton $ml={3} aria-label="元に戻す"><Icon name="undo" /></IconButton>
    <IconButton $ml={10} $dim aria-label="やり直し"><Icon name="redo" /></IconButton>
    <Spacer />
    <TextButton $gap={10}><Icon name="layout" />JP stocks</TextButton>
    <IconButton $w={20} $ml={8} aria-label="レイアウト"><Icon name="chevron" /></IconButton>
    <User>J</User>
    <Divider $m={12} />
    <IconButton $w={24} aria-label="クイック検索"><Icon name="boltSearch" /></IconButton>
    <IconButton $ml={12} aria-label="設定"><Icon name="hexagon" size={28} /></IconButton>
    <IconButton $ml={10} aria-label="全画面"><Icon name="fullscreen" /></IconButton>
    <IconButton $ml={10} aria-label="スナップショット"><Icon name="camera" size={28} /></IconButton>
    <Trade>
      <TradeButton><Logo $bg="#f2f2f2"><TvMark width={13} color="#0f0f0f" /></Logo>トレード</TradeButton>
      <IconButton aria-label="トレードメニュー"><Icon name="chevron" /></IconButton>
    </Trade>
    <Post>投稿</Post>
  </Toolbar>
);

const LeftBar = () => (
  <SideBar $gap={4} $pad="8px 0 24px">
    {drawTools.map((n, i) => <IconButton key={n} $w={34} $h={34} $active={i === 0} aria-label={n}><Icon name={n} /></IconButton>)}
    <SideRule />
    <IconButton $w={34} $h={34} aria-label="計測"><Icon name="ruler" /></IconButton>
    <IconButton $w={34} $h={34} aria-label="拡大"><Icon name="zoom" /></IconButton>
    <SideRule />
    <IconButton $w={34} $h={34} aria-label="マグネット"><Icon name="magnet" /></IconButton>
    <IconButton $w={34} $h={34} aria-label="描画モード"><Icon name="pencilLock" /></IconButton>
    <IconButton $w={34} $h={34} aria-label="ロック"><Icon name="lock" size={26} /></IconButton>
    <IconButton $w={34} $h={34} aria-label="表示"><Icon name="eye" /></IconButton>
    <IconButton $w={34} $h={34} $solid aria-label="同期"><Icon name="link" /></IconButton>
    <SideRule />
    <IconButton $w={34} $h={34} aria-label="削除"><Icon name="trash" /></IconButton>
    <Spacer />
    <IconButton $w={34} $h={34} $solid aria-label="お気に入りツール"><Icon name="star" /></IconButton>
  </SideBar>
);

const RightBar = () => (
  <SideBar $right $pad="1px 0 9px">
    <IconButton $w={45} $h={46} aria-label="ウォッチリスト"><Icon name="bookmark" /></IconButton>
    <BadgeHolder>
      <IconButton $w={45} $h={46} aria-label="アラート"><Icon name="clock" size={30} /></IconButton>
      <Badge>66</Badge>
    </BadgeHolder>
    <IconButton $w={45} $h={46} aria-label="オブジェクト"><Icon name="layers" size={30} /></IconButton>
    <IconButton $w={45} $h={46} aria-label="チャット"><Icon name="chats" size={30} /></IconButton>
    <Spacer />
    {["radar", "mountain", "calendar", "rss", "bell"].map((n) => (
      <IconButton key={n} $w={45} $h={45} aria-label={n}><Icon name={n} size={30} /></IconButton>
    ))}
    <AppsCircle aria-label="アプリ"><Icon name="apps" /></AppsCircle>
    <SideRule $m={11} />
    <IconButton $w={34} $h={34} aria-label="ヘルプ"><Icon name="help" size={30} /></IconButton>
  </SideBar>
);

function App() {
  return (
    <Page>
      <GlobalStyle />
      <Tabs />
      <TopToolbar />
      <Body>
        <LeftBar />
        <Center>
          <Charts>
            <DailyChart />
            <MainChart />
            <SecondsChart />
          </Charts>
          <RangeBar>
            {ranges.map((r) => <button key={r}>{r}</button>)}
            <Divider $m={-2} />
            <IconButton $w={24} aria-label="日付に移動"><Icon name="calGo" size={30} /></IconButton>
            <Spacer />
            <button>13:27:54 UTC+9</button>
            <Divider $m={-2} />
            <button>配当調整</button>
            <IconButton aria-label="最大化"><Icon name="expand" /></IconButton>
          </RangeBar>
          <Panel>
            <Paper>
              <PaperIcon><TvMark width={15} color="#fff" /></PaperIcon>
              ペーパートレード
            </Paper>
            <Favorites>
              <Icon name="drag" size={24} />
              {favorites.map((n) => <IconButton key={n} $w={38} $h={38} aria-label={n}><Icon name={n} size={26} /></IconButton>)}
            </Favorites>
            <Spacer />
            <IconButton $w={34} aria-label="開く"><Icon name="chevronUp" /></IconButton>
            <IconButton $w={34} aria-label="最大化"><Icon name="expand" size={32} /></IconButton>
          </Panel>
        </Center>
        <RightBar />
      </Body>
    </Page>
  );
}

export default App;
